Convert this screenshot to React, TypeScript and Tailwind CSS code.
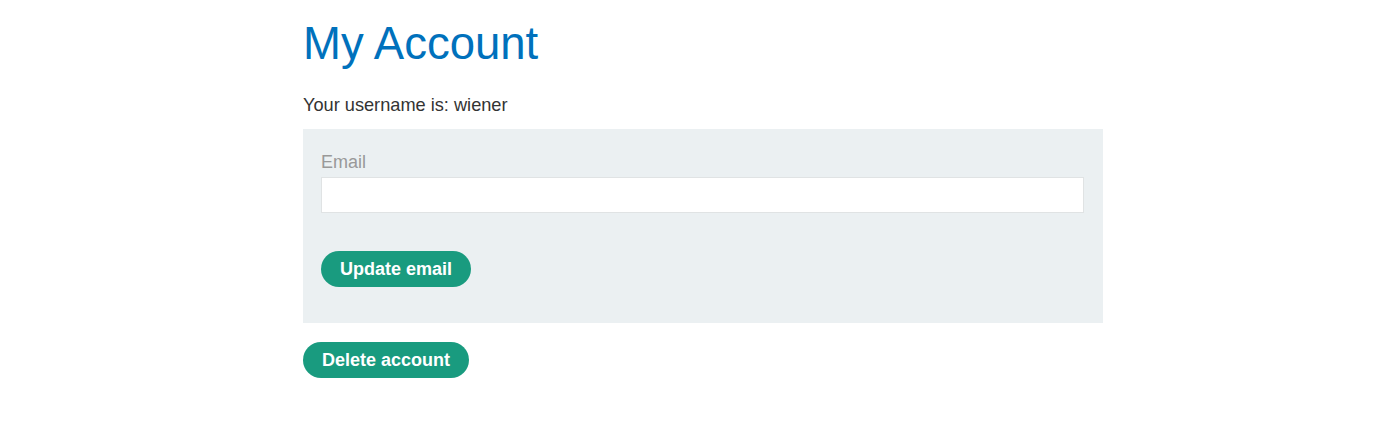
import React from 'react';

export default function App() {
  return (
    <div className="min-h-[422px] bg-white font-['Liberation_Sans',Arial,sans-serif]">
      <div className="mx-auto w-[800px] translate-x-[3px] pt-[18px]">
        <h1 className="text-[45.5px] leading-[52px] font-normal text-[#0071bc]">My Account</h1>
        <p className="mt-[23px] text-[18.2px] leading-[24px] text-[#333333]">Your username is: wiener</p>
        <form className="mt-[12px] bg-[#ebf0f2] pl-[18px] pr-[19px] pt-[21px] pb-[36px]" onSubmit={(e) => e.preventDefault()}>
          <label className="block text-[18px] leading-[24px] text-[#999999]">Email</label>
          <input
            type="email"
            className="mt-[3px] block h-[36px] w-full border border-[#e0e3e4] bg-white px-2 outline-none"
          />
          <button
            type="submit"
            className="mt-[38px] h-[36px] rounded-full bg-[#199b7f] px-[19px] text-[18px] font-bold leading-none text-white"
          >
            Update email
          </button>
        </form>
        <button className="mt-[19px] h-[36px] rounded-full bg-[#199b7f] px-[19px] text-[18px] font-bold leading-none text-white">
          Delete account
        </button>
      </div>
    </div>
  );
}
